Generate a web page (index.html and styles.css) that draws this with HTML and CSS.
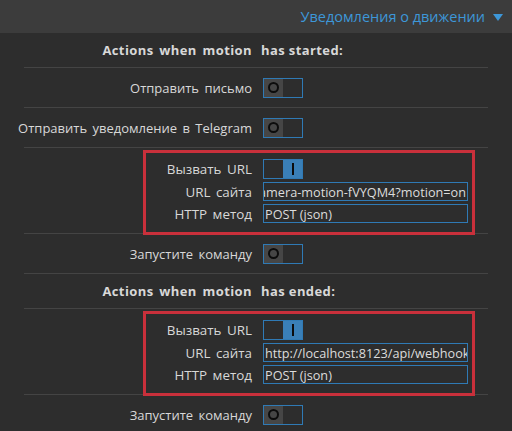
FILE: index.html
```html
<!DOCTYPE html>
<html lang="ru">
<head>
<meta charset="utf-8">
<link rel="stylesheet" href="styles.css">
</head>
<body>
<div class="topbar">
  <span class="topbar-title">Уведомления о движении</span>
  <span class="topbar-arrow"></span>
</div>
<div class="settings">
  <div class="row heading">
    <div class="label">Actions when motion</div>
    <div class="value">has started:</div>
  </div>
  <div class="row">
    <div class="label">Отправить письмо</div>
    <div class="value"><span class="toggle off"><span class="knob"><span class="ring"></span></span><span class="rest"></span></span></div>
  </div>
  <div class="row">
    <div class="label">Отправить уведомление в Telegram</div>
    <div class="value"><span class="toggle off"><span class="knob"><span class="ring"></span></span><span class="rest"></span></span></div>
  </div>
  <div class="row boxed">
    <div class="redbox">
      <div class="subrow">
        <div class="label">Вызвать URL</div>
        <div class="value"><span class="toggle on"><span class="rest"></span><span class="knob"><span class="bar"></span></span></span></div>
      </div>
      <div class="subrow">
        <div class="label">URL сайта</div>
        <div class="value"><div class="field end"><span>http://localhost:8123/api/webhook/camera-motion-fVYQM4?motion=on</span></div></div>
      </div>
      <div class="subrow">
        <div class="label">HTTP метод</div>
        <div class="value"><div class="field"><span>POST (json)</span></div></div>
      </div>
    </div>
  </div>
  <div class="row">
    <div class="label">Запустите команду</div>
    <div class="value"><span class="toggle off"><span class="knob"><span class="ring"></span></span><span class="rest"></span></span></div>
  </div>
  <div class="row heading">
    <div class="label">Actions when motion</div>
    <div class="value">has ended:</div>
  </div>
  <div class="row boxed">
    <div class="redbox">
      <div class="subrow">
        <div class="label">Вызвать URL</div>
        <div class="value"><span class="toggle on"><span class="rest"></span><span class="knob"><span class="bar"></span></span></span></div>
      </div>
      <div class="subrow">
        <div class="label">URL сайта</div>
        <div class="value"><div class="field"><span>http://localhost:8123/api/webhook/camera-motion-fVYQM4?motion=off</span></div></div>
      </div>
      <div class="subrow">
        <div class="label">HTTP метод</div>
        <div class="value"><div class="field"><span>POST (json)</span></div></div>
      </div>
    </div>
  </div>
  <div class="row last">
    <div class="label">Запустите команду</div>
    <div class="value"><span class="toggle off"><span class="knob"><span class="ring"></span></span><span class="rest"></span></span></div>
  </div>
</div>
</body>
</html>
```
FILE: styles.css
```css
html, body {
  margin: 0;
  padding: 0;
}
body {
  background: #2d2d2d;
  color: #d8d8d8;
  font-family: "Open Sans", "Noto Sans", "DejaVu Sans", sans-serif;
  font-size: 13px;
  height: 431px;
  overflow: hidden;
}
.topbar {
  height: 33px;
  background: #3c3c3c;
  display: flex;
  justify-content: flex-end;
  align-items: center;
  padding-right: 9px;
  gap: 8px;
}
.topbar-title {
  color: #3d97d8;
  font-size: 14.5px;
}
.topbar-arrow {
  width: 0;
  height: 0;
  border-left: 5.5px solid transparent;
  border-right: 5.5px solid transparent;
  border-top: 7px solid #3d97d8;
  margin-top: 1px;
}
.settings {
  margin: 0 24px;
}
.row {
  display: grid;
  grid-template-columns: 228px 1fr;
  column-gap: 11px;
  align-items: center;
  height: 39px;
  border-bottom: 1px solid #444;
}
.row.heading {
  height: 34px;
  font-weight: bold;
  letter-spacing: 0.4px;
}
.row.heading .value {
  margin-left: -2px;
}
.row.boxed {
  display: block;
  height: 83px;
}
.row.last {
  border-bottom: none;
}
.label {
  display: flex;
  justify-content: flex-end;
  white-space: nowrap;
  word-spacing: 2px;
}
.subrow .label {
  font-size: 13.4px;
}
.value {
  display: flex;
  align-items: center;
  white-space: nowrap;
}
.redbox {
  margin: 2px 0 0 119px;
  width: 326px;
  height: 73px;
  border: 3px solid #c9303b;
  padding-top: 6px;
  display: flex;
  flex-direction: column;
  gap: 3px;
}
.subrow {
  display: grid;
  grid-template-columns: 106px 205px;
  column-gap: 11px;
  align-items: center;
}
.subrow:first-child {
  height: 20px;
}
.toggle {
  box-sizing: border-box;
  width: 40px;
  height: 20px;
  border: 1px solid #2f7ab5;
  display: flex;
}
.toggle .knob, .toggle .rest {
  flex: 1;
  display: flex;
  align-items: center;
  justify-content: center;
}
.toggle.off .knob {
  background: #464646;
}
.toggle.on .knob {
  background: #3a7fb7;
}
.ring {
  box-sizing: border-box;
  width: 11px;
  height: 11px;
  border: 2px solid #0c0c0c;
  border-radius: 50%;
}
.bar {
  width: 2px;
  height: 12px;
  background: #0c0c0c;
}
.field {
  box-sizing: border-box;
  width: 205px;
  height: 19px;
  border: 1px solid #2f7ab5;
  display: flex;
  align-items: center;
  overflow: hidden;
  padding: 0 1px;
  white-space: nowrap;
  color: #dcdcdc;
  font-size: 12.7px;
}
.field.end {
  justify-content: flex-end;
}
```
